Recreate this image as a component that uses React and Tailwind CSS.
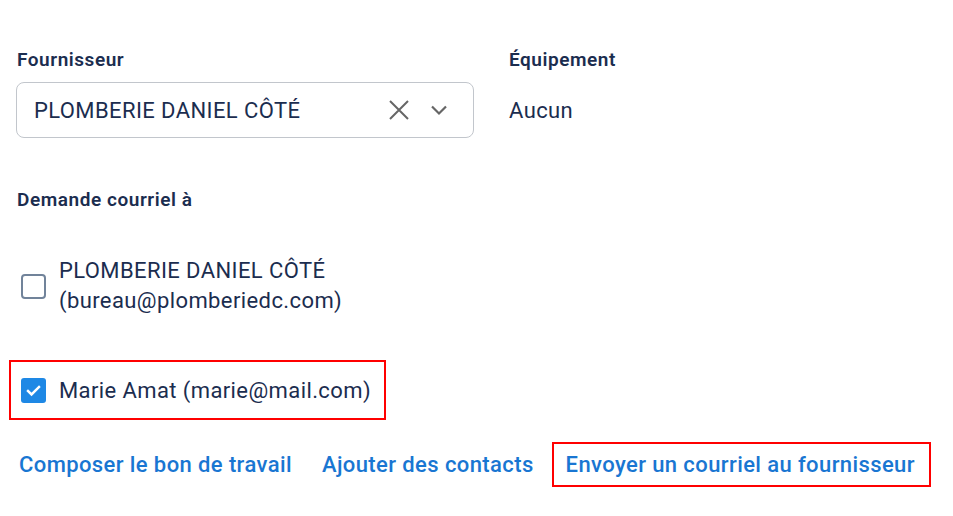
import React from 'react'

const Box = ({ checked }) => {
  if (checked) {
    return (
      <div className="w-[25px] h-[25px] rounded-[3px] bg-[#1e88e5] flex items-center justify-center shrink-0">
        <svg width="19" height="19" viewBox="0 0 24 24" fill="none" stroke="white" strokeWidth="3" strokeLinecap="square">
          <path d="M5 12.5l4.5 4.5L19 7.5" />
        </svg>
      </div>
    )
  }
  return <div className="w-[25px] h-[25px] rounded-[4px] border-2 border-[#71839a] shrink-0"></div>
}

const App = () => {
  return (
    <div className="min-h-screen bg-white pl-4 pt-12 text-[#1b2d4f] tracking-[0.4px]" style={{ fontFamily: 'Roboto, sans-serif' }}>
      {/* fournisseur + equipement */}
      <div className="flex">
        <div className="w-[458px]">
          <div className="text-[19px] font-semibold leading-6 pl-px tracking-[0.55px]">Fournisseur</div>
          <div className="mt-2.5 h-14 rounded-lg border border-[#c2c6cc] flex items-center pl-[17px] pr-[25px]">
            <span className="text-[22px] flex-1">PLOMBERIE DANIEL CÔTÉ</span>
            <svg width="22" height="22" viewBox="0 0 22 22" fill="none" stroke="#666" strokeWidth="2">
              <path d="M2 2l18 18M20 2L2 20" />
            </svg>
            <svg className="ml-[20px]" width="18" height="18" viewBox="0 0 18 18" fill="none" stroke="#666" strokeWidth="2.2">
              <path d="M2 5.5l7 7 7-7" />
            </svg>
          </div>
        </div>
        <div className="ml-[35px]">
          <div className="text-[19px] font-semibold leading-6 tracking-[0.55px]">Équipement</div>
          <div className="mt-2.5 h-14 flex items-center text-[22px]">Aucun</div>
        </div>
      </div>

      <div className="mt-[50px] text-[19px] font-semibold leading-6 pl-px tracking-[0.55px]">Demande courriel à</div>

      {/* contacts */}
      <div className="mt-[44px] flex items-center">
        <div className="ml-[5px]"><Box /></div>
        <div className="ml-[13px] text-[22px] leading-[30px]">
          PLOMBERIE DANIEL CÔTÉ
          <br />
          (bureau@plomberiedc.com)
        </div>
      </div>

      <div className="mt-[44px] -ml-[7px] w-[377px] h-[60px] border-2 border-[#ff0000] flex items-center pl-[10px]">
        <Box checked />
        <span className="ml-[13px] text-[22px]">Marie Amat (marie@mail.com)</span>
      </div>

      {/* actions */}
      <div className="mt-[22px] flex items-center text-[22px] font-medium text-[#1976d2]">
        <a className="ml-[3px]">Composer le bon de travail</a>
        <a className="ml-[30px]">Ajouter des contacts</a>
        <a className="ml-[18px] h-[45px] flex items-center border-2 border-[#ff0000] pl-3 pr-[14px]">Envoyer un courriel au fournisseur</a>
      </div>
    </div>
  )
}

export default App
